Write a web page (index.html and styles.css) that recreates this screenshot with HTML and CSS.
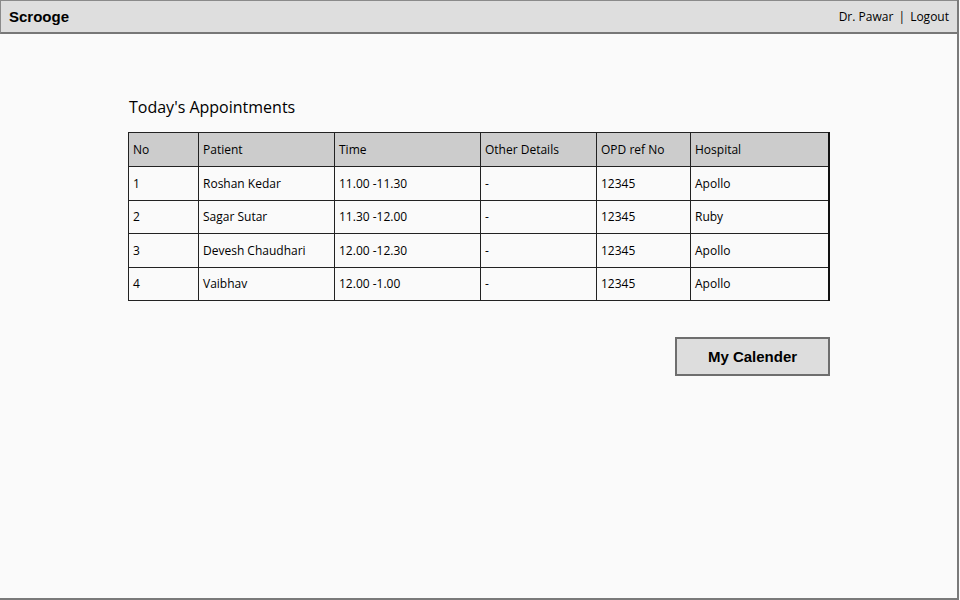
FILE: index.html
```html
<!DOCTYPE html>
<html>
<head>
<meta charset="utf-8">
<link rel="stylesheet" href="styles.css">
</head>
<body>
<div class="frame">
  <header class="topbar">
    <div class="brand">Scrooge</div>
    <div class="user">Dr. Pawar <span class="sep">|</span> Logout</div>
  </header>
  <main class="content">
    <h1 class="title">Today's Appointments</h1>
    <table class="appts">
      <colgroup>
        <col class="c1"><col class="c2"><col class="c3"><col class="c4"><col class="c5"><col class="c6">
      </colgroup>
      <thead>
        <tr><th>No</th><th>Patient</th><th>Time</th><th>Other Details</th><th>OPD ref No</th><th>Hospital</th></tr>
      </thead>
      <tbody>
        <tr><td>1</td><td>Roshan Kedar</td><td>11.00 -11.30</td><td>-</td><td>12345</td><td>Apollo</td></tr>
        <tr><td>2</td><td>Sagar Sutar</td><td>11.30 -12.00</td><td>-</td><td>12345</td><td>Ruby</td></tr>
        <tr><td>3</td><td>Devesh Chaudhari</td><td>12.00 -12.30</td><td>-</td><td>12345</td><td>Apollo</td></tr>
        <tr><td>4</td><td>Vaibhav</td><td>12.00 -1.00</td><td>-</td><td>12345</td><td>Apollo</td></tr>
      </tbody>
    </table>
    <div class="actions">
      <button class="btn">My Calender</button>
    </div>
  </main>
</div>
</body>
</html>
```
FILE: styles.css
```css
* { box-sizing: border-box; }
html, body { margin: 0; padding: 0; }
body {
  width: 960px;
  height: 600px;
  background: #fafafa;
  font-family: "Open Sans", "DejaVu Sans", sans-serif;
  color: #000;
  overflow: hidden;
}
.frame {
  width: 959px;
  height: 600px;
  border-right: 2px solid #7a7a7a;
  border-bottom: 2px solid #7a7a7a;
  display: flex;
  flex-direction: column;
}
.topbar {
  height: 34px;
  background: #dedede;
  border-top: 1px solid #8a8a8a;
  border-left: 1px solid #8a8a8a;
  border-bottom: 2px solid #777;
  display: flex;
  align-items: center;
  justify-content: space-between;
  padding: 0 8px 0 8px;
}
.brand {
  font-family: "Liberation Sans", Arial, sans-serif;
  font-weight: bold;
  font-size: 15px;
}
.user {
  font-size: 12px;
}
.sep { margin: 0 2px; }
.content {
  padding: 62px 0 0 128px;
  display: flex;
  flex-direction: column;
  width: 830px;
}
.title {
  font-size: 16px;
  font-weight: normal;
  margin: 0 0 14px 1px;
  line-height: 22px;
}
.appts {
  border-collapse: collapse;
  width: 700px;
  table-layout: fixed;
  border: 1px solid #111;
  border-right-width: 2px;
  font-size: 12px;
}
.c1 { width: 70px; }
.c2 { width: 136px; }
.c3 { width: 146px; }
.c4 { width: 116px; }
.c5 { width: 94px; }
.c6 { width: 138px; }
.appts th, .appts td {
  border: 1px solid #222;
  height: 33.5px;
  padding: 0 4px;
  text-align: left;
  font-weight: normal;
  white-space: nowrap;
}
.appts th {
  background: #cccccc;
  height: 34px;
}
.actions {
  display: flex;
  justify-content: flex-end;
  margin-top: 36px;
}
.btn {
  width: 155px;
  height: 39px;
  background: #dddddd;
  border: 2px solid #6e6e6e;
  font-family: "Liberation Sans", Arial, sans-serif;
  font-weight: bold;
  font-size: 15px;
  color: #000;
  padding: 0;
}
```
